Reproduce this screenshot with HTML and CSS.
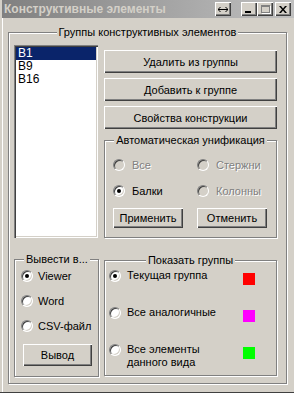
FILE: index.html
```html
<!DOCTYPE html>
<html lang="ru">
<head>
    <meta charset="UTF-8">
    <title>Конструктивные элементы</title>
    <link rel="stylesheet" href="styles.css">
</head>
<body>
<div class="window">
    <div class="titlebar">
        <span class="title">Конструктивные элементы</span>
        <span class="tb-btn tb-pin">
            <svg width="10" height="5" viewBox="0 0 10 5"><path d="M0 2.5h10M2.5 0L0 2.5 2.5 5M7.5 0L10 2.5 7.5 5" stroke="#000" fill="none"/></svg>
        </span>
        <span class="tb-btn tb-min"><span class="min-bar"></span></span>
        <span class="tb-btn tb-max"><span class="max-box"></span></span>
        <span class="tb-btn tb-close">
            <svg width="8" height="7" viewBox="0 0 8 7"><path d="M0 0h2l2 2.5 2-2.5h2l-3 3.5 3 3.5h-2l-2-2.5-2 2.5h-2l3-3.5z" fill="#000"/></svg>
        </span>
    </div>

    <div class="client">
        <div class="group outer">
            <div class="group-title">Группы конструктивных элементов</div>
            <div class="outer-body">
                <div class="listbox">
                    <div class="item selected">B1</div>
                    <div class="item">B9</div>
                    <div class="item">B16</div>
                </div>

                <div class="right-col">
                    <div class="btn wide">Удалить из группы</div>
                    <div class="btn wide">Добавить к группе</div>
                    <div class="btn wide">Свойства конструкции</div>

                    <div class="group unify">
                        <div class="group-title">Автоматическая унификация</div>
                        <div class="unify-grid">
                            <label class="opt disabled"><span class="radio"></span>Все</label>
                            <label class="opt disabled"><span class="radio"></span>Стержни</label>
                            <label class="opt"><span class="radio checked"></span>Балки</label>
                            <label class="opt disabled"><span class="radio"></span>Колонны</label>
                            <div class="btn small">Применить</div>
                            <div class="btn small">Отменить</div>
                        </div>
                    </div>
                </div>

                <div class="group output">
                    <div class="group-title left">Вывести в...</div>
                    <div class="output-list">
                        <label class="opt"><span class="radio checked"></span>Viewer</label>
                        <label class="opt"><span class="radio"></span>Word</label>
                        <label class="opt"><span class="radio"></span>CSV-файл</label>
                    </div>
                    <div class="btn out-btn">Вывод</div>
                </div>

                <div class="group show">
                    <div class="group-title">Показать группы</div>
                    <div class="show-list">
                        <div class="show-row">
                            <span class="radio checked"></span>
                            <span class="show-text">Текущая группа</span>
                            <span class="swatch" style="background:#ff0000"></span>
                        </div>
                        <div class="show-row">
                            <span class="radio"></span>
                            <span class="show-text">Все аналогичные</span>
                            <span class="swatch" style="background:#ff00ff"></span>
                        </div>
                        <div class="show-row">
                            <span class="radio"></span>
                            <span class="show-text">Все элементы<br>данного вида</span>
                            <span class="swatch" style="background:#00ff00"></span>
                        </div>
                    </div>
                </div>
            </div>
        </div>
    </div>
</div>
</body>
</html>
```

FILE: styles.css
```css
body {
    margin: 0;
    background: #fff;
    font-family: "Liberation Sans", Arial, sans-serif;
    font-size: 11px;
    color: #000;
}
.window {
    width: 294px;
    height: 392px;
    background: #d4d0c8;
    border-bottom: 1px solid #404040;
    display: flex;
    flex-direction: column;
}

/* заголовок окна */
.titlebar {
    height: 18px;
    margin-left: 2px;
    padding-left: 2px;
    background: linear-gradient(to right, #808080, #c0c0c0);
    display: flex;
    align-items: center;
}
.title {
    color: #d4d0c8;
    font-weight: bold;
    font-size: 12px;
    flex: 1;
}
.tb-btn {
    width: 16px;
    height: 14px;
    box-sizing: border-box;
    background: #d4d0c8;
    box-shadow: inset 1px 1px #fff, inset -1px -1px #404040, inset -2px -2px #808080;
    display: flex;
    align-items: center;
    justify-content: center;
}
.tb-pin {
    margin-right: 10px;
}
.tb-max {
    margin-right: 2px;
}
.tb-close {
    margin-right: 3px;
}
.tb-min {
    align-items: flex-end;
    justify-content: flex-start;
}
.min-bar {
    width: 6px;
    height: 2px;
    background: #000;
    margin: 0 0 3px 4px;
}
.max-box {
    width: 9px;
    height: 8px;
    box-sizing: border-box;
    border: 1px solid #808080;
    border-top-width: 2px;
    box-shadow: 1px 1px #fff;
}

.client {
    flex: 1;
    margin-left: 2px;
    border-left: 1px solid #fff;
    padding: 14px 0 0 5px;
}

/* рамки групп */
.group {
    box-sizing: border-box;
    border: 1px solid #808080;
    box-shadow: inset 1px 1px #fff, 1px 1px #fff;
}
.group-title {
    width: fit-content;
    margin: -8px auto 0;
    padding: 0 2px;
    line-height: 14px;
    background: #d4d0c8;
}
.group-title.left {
    margin-left: 9px;
}
.outer {
    width: 279px;
    height: 352px;
}
.outer-body {
    display: grid;
    grid-template-columns: 86px 173px;
    grid-template-rows: 193px auto;
    column-gap: 4px;
    row-gap: 21px;
    margin-top: 6px;
    padding-left: 5px;
    align-items: start;
}

/* список */
.listbox {
    width: 84px;
    height: 193px;
    box-sizing: border-box;
    background: #fff;
    padding: 2px;
    font-size: 12px;
    box-shadow: inset 1px 1px #808080, inset 2px 2px #404040, inset -1px -1px #fff, inset -2px -2px #d4d0c8;
}
.item {
    line-height: 13px;
    padding-left: 2px;
}
.item.selected {
    background: #0a246a;
    color: #fff;
}

/* кнопки */
.btn {
    box-sizing: border-box;
    background: #d4d0c8;
    box-shadow: inset 1px 1px #fff, inset -1px -1px #404040, inset -2px -2px #808080;
    display: flex;
    align-items: center;
    justify-content: center;
}
.right-col {
    display: flex;
    flex-direction: column;
    gap: 5px;
    padding-top: 5px;
}
.btn.wide {
    height: 23px;
}
.unify {
    height: 98px;
    margin-top: 6px;
}
.unify-grid {
    display: grid;
    grid-template-columns: 84px 70px;
    grid-template-rows: 16px 16px 20px;
    row-gap: 10px;
    padding-left: 8px;
    margin-top: 10px;
}
.btn.small {
    width: 70px;
    height: 20px;
    margin-top: -1px;
}

/* радиокнопки */
.opt {
    display: flex;
    align-items: center;
    gap: 7px;
}
.opt.disabled {
    color: #808080;
    text-shadow: 1px 1px #fff;
}
.radio {
    width: 12px;
    height: 12px;
    flex: none;
    box-sizing: border-box;
    border-radius: 50%;
    border: 1px solid;
    border-color: #808080 #fff #fff #808080;
    box-shadow: inset 1px 1px #404040, inset -1px -1px #d4d0c8;
    background: #fff;
    display: flex;
    align-items: center;
    justify-content: center;
}
.opt.disabled .radio {
    background: #d4d0c8;
}
.radio.checked::after {
    content: "";
    width: 4px;
    height: 4px;
    border-radius: 50%;
    background: #000;
}

.output {
    width: 85px;
    height: 118px;
}
.output-list {
    display: flex;
    flex-direction: column;
    gap: 9px;
    padding: 2px 0 0 6px;
}
.output-list .opt {
    height: 16px;
    gap: 5px;
}
.out-btn {
    width: 69px;
    height: 22px;
    margin: 10px 0 0 8px;
}

.show {
    height: 116px;
    margin-top: 1px;
}
.show-list {
    display: flex;
    flex-direction: column;
    gap: 21px;
    padding: 2px 21px 0 4px;
}
.show-row {
    display: flex;
    align-items: flex-start;
    line-height: 13px;
}
.show-row .radio {
    margin-top: 1px;
}
.show-text {
    flex: 1;
    margin-left: 6px;
}
.swatch {
    width: 12px;
    height: 12px;
    margin-top: 4px;
}
```
